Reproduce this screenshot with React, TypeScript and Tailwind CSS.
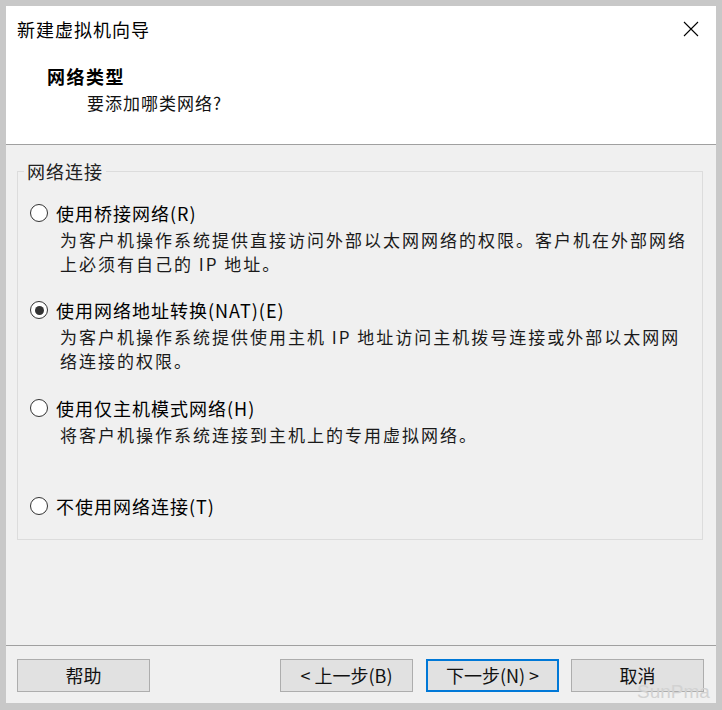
import React from "react";

const cjk = { fontFamily: '"Noto Sans CJK SC", "Noto Sans", sans-serif' };

const options = [
  {
    label: "使用桥接网络(R)",
    desc: ["为客户机操作系统提供直接访问外部以太网网络的权限。客户机在外部网络", "上必须有自己的 IP 地址。"],
    checked: false,
    mt: "mt-[18px]",
  },
  {
    label: "使用网络地址转换(NAT)(E)",
    desc: ["为客户机操作系统提供使用主机 IP 地址访问主机拨号连接或外部以太网网", "络连接的权限。"],
    checked: true,
    mt: "mt-[22px]",
  },
  {
    label: "使用仅主机模式网络(H)",
    desc: ["将客户机操作系统连接到主机上的专用虚拟网络。"],
    checked: false,
    mt: "mt-[23px]",
  },
  {
    label: "不使用网络连接(T)",
    desc: [],
    checked: false,
    mt: "mt-[47px]",
  },
];

function Radio({ checked }: { checked: boolean }) {
  return (
    <span className="w-[18px] h-[18px] rounded-full border border-[#333333] bg-white flex items-center justify-center shrink-0">
      {checked && <span className="w-[9px] h-[9px] rounded-full bg-[#333333]" />}
    </span>
  );
}

function Button({ children, primary }: { children: React.ReactNode; primary?: boolean }) {
  return (
    <button
      className={`h-[33px] w-[133px] bg-[#e1e1e1] text-[18px] text-[#111] flex items-center justify-center ${
        primary ? "border-2 border-[#0078d7]" : "border border-[#adadad]"
      }`}
      style={cjk}
    >
      {children}
    </button>
  );
}

export default function App() {
  return (
    <div className="relative w-[722px] h-[710px] bg-[#c8c8c8] pt-[6px] pl-[6px] pr-[6px] pb-[7px]" style={cjk}>
      <div className="w-[710px] h-[697px] bg-[#f0f0f0] flex flex-col">
        {/* header */}
        <div className="h-[139px] bg-white border-b border-[#a0a0a0] flex flex-col">
          <div className="flex items-center justify-between pt-[11px] pl-[11px] pr-[17px]">
            <span className="text-[18px] leading-[24px] tracking-[1px] text-black">新建虚拟机向导</span>
            <svg width="16" height="16" viewBox="0 0 16 16" className="text-black">
              <path d="M1 1 L15 15 M15 1 L1 15" stroke="currentColor" strokeWidth="1.1" fill="none" />
            </svg>
          </div>
          <div className="mt-[23px] pl-[41px] text-[18px] leading-[24px] font-bold tracking-[1.5px] text-black">
            网络类型
          </div>
          <div className="mt-[3px] pl-[81px] text-[17px] leading-[24px] tracking-[1px] text-[#111]">
            要添加哪类网络?
          </div>
        </div>

        {/* group box */}
        <fieldset className="mt-[14px] ml-[11px] w-[686px] border border-[#dcdcdc] pl-[12px] pb-[21px]">
          <legend className="-ml-[6px] px-[3px] text-[18px] leading-[24px] tracking-[1px] text-[#222]">网络连接</legend>
          {options.map((o) => (
            <div key={o.label} className={o.mt}>
              <div className="flex items-center gap-[8px] h-[24px]">
                <Radio checked={o.checked} />
                <span className="text-[18px] leading-[24px] tracking-[1px] text-black whitespace-nowrap">{o.label}</span>
              </div>
              {o.desc.length > 0 && (
                <div className="mt-[3px] pl-[30px] text-[17px] leading-[24px] tracking-[2px] text-[#1a1a1a] whitespace-nowrap">
                  {o.desc.map((d) => (
                    <div key={d}>{d}</div>
                  ))}
                </div>
              )}
            </div>
          ))}
        </fieldset>

        <div className="flex-1" />

        {/* footer */}
        <div className="border-t border-[#a0a0a0]" />
        <div className="flex items-center pt-[13px] pb-[11px] pl-[11px] pr-[12px]">
          <Button>帮助</Button>
          <div className="flex-1" />
          <Button>&lt; 上一步(B)</Button>
          <div className="ml-[13px]">
            <Button primary>下一步(N) &gt;</Button>
          </div>
          <div className="ml-[12px]">
            <Button>取消</Button>
          </div>
        </div>
      </div>

      {/* watermark */}
      <span
        className="absolute left-[637px] top-[680px] text-[19px] leading-[24px] text-[#d2d2d2] pointer-events-none"
        style={{ fontFamily: '"Liberation Sans", Arial, sans-serif' }}
      >
        SunPma
      </span>
    </div>
  );
}
